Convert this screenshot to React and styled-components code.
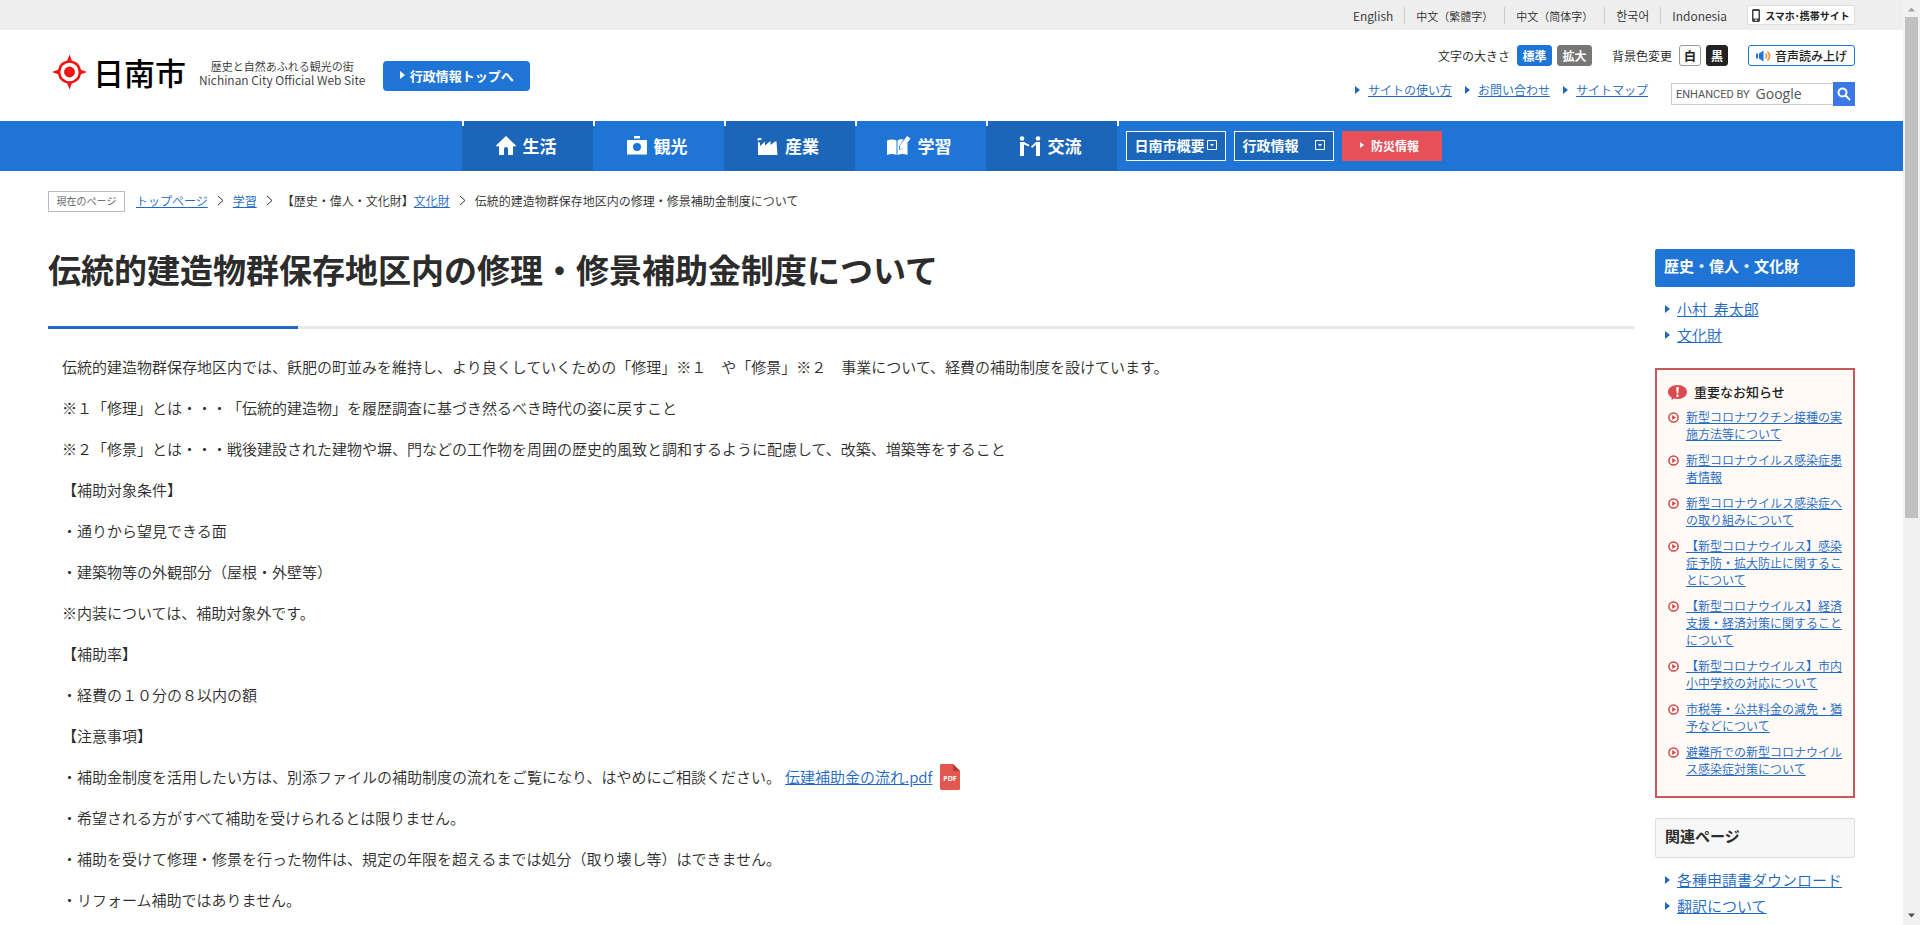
import React from 'react';
import styled, { createGlobalStyle, css, ThemeProvider } from 'styled-components';

const theme = {
  main_font: "'Noto Sans CJK JP', 'Noto Sans', sans-serif",
  primary: '#1f75d5',
  primary_dark: '#1b66b8',
  link: '#2068c4',
  text: '#2c2c2c',
  red: '#e65058',
  notice: '#c8595b',
};

const GlobalStyle = createGlobalStyle`
  * {
    box-sizing: border-box;
  }
  body {
    margin: 0;
    background-color: #fff;
    color: ${theme.text};
    font-family: ${theme.main_font};
    font-size: 15px;
    font-weight: 350;
    text-spacing-trim: space-all;
  }
  h1, h2, p, ul, ol {
    margin: 0;
    padding: 0;
  }
  ul, ol {
    list-style: none;
  }
  button, input {
    font-family: inherit;
    padding: 0;
    margin: 0;
  }
  svg {
    display: block;
    flex: none;
  }
  a {
    color: ${theme.link};
  }
`;

const Shell = styled.div`
  display: flex;
`;
const Page = styled.div`
  flex: 1;
  min-width: 0;
  min-height: 100vh;
`;

/* Scrollbar */
const Scrollbar = styled.div`
  display: flex;
  flex-direction: column;
  align-items: center;
  justify-content: space-between;
  position: sticky;
  top: 0;
  width: 17px;
  height: 100vh;
  padding: 7px 0;
  background-color: #f1f1f1;
`;
const Thumb = styled.div`
  width: 13px;
  height: 55%;
  margin: 5px 0 auto;
  background-color: #c1c1c1;
`;

/* Language bar */
const TopBar = styled.div`
  display: flex;
  align-items: center;
  justify-content: flex-end;
  height: 30px;
  padding: 0 48px;
  background-color: #eee;
`;
const Languages = styled.ul`
  display: flex;
  margin-right: 9px;
  li {
    padding: 0 11px;
    line-height: 16px;
    & + li {
      border-left: 1px solid #ccc;
    }
  }
  a {
    color: ${({ theme: { text } }) => text};
    font-size: 12px;
    text-decoration: none;
  }
`;
const CjkLanguage = styled.li`
  a {
    font-size: 11px;
  }
`;
const MobileSite = styled.a`
  display: flex;
  align-items: center;
  justify-content: center;
  gap: 5px;
  width: 108px;
  height: 20px;
  border: 1px solid #ddd;
  border-radius: 2px;
  background-color: #fff;
  color: #222;
  font-size: 10px;
  font-weight: bold;
  white-space: nowrap;
  text-decoration: none;
`;

/* Header */
const HeaderArea = styled.header`
  display: flex;
  justify-content: space-between;
  height: 91px;
  padding: 0 48px;
`;
const Brand = styled.div`
  display: flex;
  align-items: center;
  height: 84px;
  padding-left: 4px;
`;
const CityName = styled.a`
  display: flex;
  align-items: center;
  gap: 6px;
  color: #000;
  font-size: 31px;
  font-weight: 500;
  line-height: 40px;
  text-decoration: none;
`;
const Tagline = styled.p`
  margin: 2px 18px 0 13px;
  color: #333;
  font-size: 11px;
  line-height: 13px;
  text-align: center;
  white-space: nowrap;
  span {
    font-size: 12px;
  }
`;
const AdminTop = styled.a`
  display: flex;
  align-items: center;
  justify-content: center;
  gap: 5px;
  width: 147px;
  height: 30px;
  margin-top: 8px;
  padding-bottom: 2px;
  border-radius: 4px;
  background-color: ${({ theme: { primary } }) => primary};
  color: #fff;
  font-size: 13px;
  font-weight: bold;
  white-space: nowrap;
  text-decoration: none;
`;
const Tools = styled.div`
  display: flex;
  flex-direction: column;
  align-items: flex-end;
  gap: 16px;
  padding-top: 15px;
`;
const ToolRow = styled.div`
  display: flex;
  align-items: center;
  height: ${props => props.$height};
`;
const ToolLabel = styled.span`
  margin-right: 7px;
  color: #222;
  font-size: 12px;
  line-height: 21px;
`;
const ToolButton = styled.button`
  width: ${props => props.$width};
  height: 21px;
  margin-right: ${props => (props.$last ? '20px' : '5px')};
  border: 1px solid ${props => props.$border || props.$bg};
  border-radius: 3px;
  background-color: ${props => props.$bg};
  color: ${props => props.$color || '#fff'};
  font-size: 12px;
  font-weight: bold;
  line-height: 18px;
`;
const ReadAloud = styled.button`
  display: flex;
  align-items: center;
  justify-content: center;
  gap: 4px;
  width: 107px;
  height: 21px;
  border: 1px solid ${({ theme: { primary } }) => primary};
  border-radius: 3px;
  background-color: #fff;
  color: #222;
  font-size: 12px;
  font-weight: 500;
  line-height: 18px;
`;
const SubLinks = styled.ul`
  display: flex;
  gap: 13px;
  margin-right: 23px;
  padding-bottom: 8px;
  li {
    display: flex;
    align-items: center;
    gap: 8px;
    font-size: 12px;
    line-height: 18px;
  }
`;
const Search = styled.form`
  display: flex;
  align-items: center;
  width: 184px;
  label {
    display: flex;
    align-items: center;
    gap: 6px;
    padding-left: 4px;
    color: #555;
    font-family: Roboto, sans-serif;
    font-size: 11px;
    font-weight: 400;
    white-space: nowrap;
  }
  input {
    flex: 1;
    min-width: 0;
    height: 20px;
    border: none;
    outline: none;
  }
`;
const SearchBox = styled.div`
  display: flex;
  flex: 1;
  align-items: center;
  height: 22px;
  min-width: 0;
  border: 1px solid #ccc;
  border-right: none;
`;
const GoogleWord = styled.span`
  font-family: 'Open Sans', sans-serif;
  font-size: 14px;
  font-weight: 500;
  line-height: 20px;
`;
const SearchButton = styled.button`
  display: flex;
  align-items: center;
  justify-content: center;
  width: 22px;
  height: 24px;
  border: 1px solid #3b78e0;
  background-color: #3b78e7;
`;

/* Global navigation */
const Nav = styled.nav`
  display: flex;
  align-items: center;
  justify-content: center;
  height: 50px;
  background-color: ${({ theme: { primary } }) => primary};
`;
const NavItem = styled.a`
  ${({ theme: { primary, primary_dark }, $dark }) => css`
    display: flex;
    align-items: center;
    justify-content: center;
    gap: 7px;
    width: 131px;
    height: 50px;
    padding: 0 2px 1px 0;
    background: linear-gradient(#fff, #fff) left top / 2px 5px no-repeat ${$dark ? primary_dark : primary};
    color: #fff;
    font-size: 17px;
    font-weight: bold;
    text-decoration: none;
  `}
`;
const NavTail = styled.div`
  display: flex;
  align-items: center;
  gap: 8px;
  height: 50px;
  padding-left: 9px;
  background: linear-gradient(#fff, #fff) left top / 2px 5px no-repeat;
`;
const NavSelect = styled.button`
  display: flex;
  align-items: center;
  justify-content: space-between;
  width: 100px;
  height: 30px;
  padding: 0 8px 2px;
  border: 1px solid #fff;
  background-color: ${({ theme: { primary_dark } }) => primary_dark};
  color: #fff;
  font-size: 14px;
  font-weight: bold;
  white-space: nowrap;
`;
const Disaster = styled.a`
  display: flex;
  align-items: center;
  justify-content: center;
  gap: 7px;
  width: 100px;
  height: 30px;
  padding: 0 4px 2px 0;
  background-color: ${({ theme: { red } }) => red};
  color: #fff;
  font-size: 12px;
  font-weight: bold;
  text-decoration: none;
`;

/* Breadcrumb */
const Breadcrumb = styled.div`
  display: flex;
  align-items: center;
  padding: 20px 48px 0;
  font-size: 12px;
  line-height: 19px;
  ol {
    display: flex;
    padding-bottom: 2px;
  }
  li {
    display: flex;
    align-items: center;
  }
  li svg {
    margin: 0 9px;
  }
`;
const Here = styled.span`
  width: 77px;
  height: 21px;
  margin-right: 11px;
  border: 1px solid #bbb;
  color: #555;
  font-size: 10px;
  line-height: 18px;
  text-align: center;
`;

/* Contents */
const Contents = styled.div`
  display: flex;
  gap: 21px;
  padding: 37px 48px 0;
`;
const Main = styled.main`
  flex: 1;
  min-width: 0;
`;
const Title = styled.h1`
  height: 80px;
  border-bottom: 3px solid #e8e8e8;
  font-size: 33px;
  font-weight: bold;
  line-height: 40px;
  position: relative;
  &::after {
    content: '';
    position: absolute;
    left: 0;
    bottom: -3px;
    width: 250px;
    height: 3px;
    background-color: ${({ theme: { link } }) => link};
  }
`;
const Article = styled.div`
  padding: 24px 14px 0;
  p {
    display: flex;
    align-items: center;
    min-height: 27px;
    margin-bottom: 14px;
    line-height: 27px;
  }
  a {
    margin: 0 8px 0 4px;
  }
`;
const Side = styled.aside`
  width: 200px;
`;
const SideTitle = styled.h2`
  height: ${props => (props.$plain ? '40px' : '38px')};
  padding: 0 9px;
  border: ${props => (props.$plain ? '1px solid #ddd' : 'none')};
  border-radius: 2px;
  background-color: ${({ $plain, theme: { primary } }) => ($plain ? '#f7f7f7' : primary)};
  color: ${({ $plain, theme: { text } }) => ($plain ? text : '#fff')};
  font-size: 15px;
  font-weight: bold;
  line-height: 33px;
`;
const SideLinks = styled.ul`
  padding: 9px 0 1px 10px;
  li {
    display: flex;
    align-items: center;
    gap: 7px;
    line-height: 26px;
    white-space: pre;
  }
`;
const Notice = styled.section`
  margin: 19px 0 20px;
  padding: 11px 6px 19px 11px;
  border: 2px solid ${({ theme: { notice } }) => notice};
  background-color: #fffaf5;
  h2 {
    display: flex;
    align-items: center;
    gap: 7px;
    margin-bottom: 5px;
    color: #222;
    font-size: 13px;
    font-weight: 500;
    line-height: 22px;
  }
  li {
    display: flex;
    gap: 7px;
    margin-bottom: 9px;
    font-size: 12px;
    line-height: 17px;
  }
  li:last-child {
    margin-bottom: 0;
  }
  li svg {
    margin-top: 4px;
  }
`;

const Arrow = ({ color = theme.link, size = 8 }) => (
  <svg width={size / 2 + 1} height={size} viewBox="0 0 5 8" preserveAspectRatio="none" fill={color}>
    <path d="M0 0l5 4-5 4z" />
  </svg>
);
const Chevron = () => (
  <svg width="7" height="11" viewBox="0 0 7 11" fill="none" stroke="#333">
    <path d="M1 1l5 4.5L1 10" />
  </svg>
);
const DropMark = () => (
  <svg width="10" height="10" viewBox="0 0 10 10" fill="none" stroke="#fff">
    <path d="M.5.5h9v9h-9z" />
    <path d="M3 4h4L5 6.5z" fill="#fff" stroke="none" />
  </svg>
);
const CityMark = () => (
  <svg width="35" height="36" viewBox="0 0 36 36">
    <path
      fill="#f01414"
      d="M18 0l2.300 6.200a12 12 0 0 1 9.500 9.500L36 18l-6.200 2.300a12 12 0 0 1-9.500 9.500L18 36l-2.300-6.200a12 12 0 0 1-9.500-9.500L0 18l6.200-2.300a12 12 0 0 1 9.500-9.500z"
    />
    <circle cx="18" cy="18" r="9.400" fill="#fff" />
    <circle cx="18" cy="18" r="5.600" fill="#f01414" />
  </svg>
);
const PhoneIcon = () => (
  <svg width="8" height="13" viewBox="0 0 8 13">
    <path fill="#444" fillRule="evenodd" d="M1 0h6l1 1v11l-1 1H1l-1-1V1zM1.500 2v7.500h5V2zM3 10.500v1.300h2v-1.300z" />
  </svg>
);
const SpeakerIcon = () => (
  <svg width="15" height="12" viewBox="0 0 15 12" fill="none">
    <path d="M0 3.500h2v5H0zM3 3.500L7.500.5v11L3 8.500z" fill="#1f75d5" />
    <path d="M9.500 3.500c1.300 1.500 1.300 3.500 0 5M11.500 1.500c2.600 2.800 2.600 6.200 0 9" stroke="#f0902c" strokeWidth="1.500" />
  </svg>
);
const SearchIcon = () => (
  <svg width="14" height="14" viewBox="0 0 14 14" fill="none" stroke="#fff" strokeWidth="2">
    <circle cx="5.500" cy="5.500" r="4" />
    <path d="M8.500 8.500L13 13" />
  </svg>
);
const HomeIcon = () => (
  <svg width="20" height="19" viewBox="0 0 20 19" fill="#fff">
    <path d="M10 0l10 9.500-1 1.300-2-.8v9h-5v-6a2 2 0 0 0-4 0v6H3v-9l-2 .8-1-1.300z" />
  </svg>
);
const CameraIcon = () => (
  <svg width="20" height="19" viewBox="0 0 20 19" fill="#fff">
    <path d="M7 0h6v2.500H7z" />
    <path fillRule="evenodd" d="M0 4h20v14.500H0zM10 7a4 4 0 1 0 0 8 4 4 0 0 0 0-8z" />
  </svg>
);
const FactoryIcon = () => (
  <svg width="21" height="18" viewBox="0 0 21 18" fill="#fff">
    <path d="M1 4.500l2 1.500v3l5-4.500v4l5.500-4.500v4L18 4.500h1.500L20.500 18H1z" />
    <path d="M0 2l2-1 3 .5L4 3 1 3.500z" />
  </svg>
);
const BookIcon = () => (
  <svg width="24" height="20" viewBox="0 0 24 20" fill="#fff">
    <path d="M0 4.500C3 3 7 3 9.500 4.500V19C7 17.500 3 17.500 0 19zM10.500 4.500C13 3.200 15 3.200 16.500 3.500L12 10v4l3.500-1.500 5-6V19c-3-1.500-7-1.500-10 0z" />
    <path d="M20 0l3.500 2.500-7 9.500-3.800 1.300.3-4z" />
  </svg>
);
const PeopleIcon = () => (
  <svg width="22" height="20" viewBox="0 0 22 20" fill="#fff">
    <circle cx="3" cy="2.500" r="2.300" />
    <circle cx="19" cy="2.500" r="2.300" />
    <path d="M1 6h4l5.500 3-.8 1.500L5 8.500V20H1zM21 6h-4l-5 4.500 1 1.400 4-3.200V20h4z" />
  </svg>
);
const AlertIcon = () => (
  <svg width="19" height="15" viewBox="0 0 19 15">
    <path fill="#d9494d" d="M9.500 0C15 0 19 3 19 7s-4 7-9.500 7a13 13 0 0 1-3.500-.5L3.500 15l.3-2.500C1.500 11.300 0 9.300 0 7c0-4 4-7 9.500-7z" />
    <path fill="#fff" d="M8.200 2h2.600l-.5 6.500H8.700zM8.500 9.500h2V12h-2z" />
  </svg>
);
const CirclePlay = () => (
  <svg width="11" height="11" viewBox="0 0 11 11">
    <circle cx="5.500" cy="5.500" r="4.600" fill="none" stroke="#d0484c" strokeWidth="1.500" />
    <path fill="#d0484c" d="M4.200 3L8 5.500 4.200 8z" />
  </svg>
);
const PdfIcon = () => (
  <svg width="20" height="26" viewBox="0 0 20 26">
    <path fill="#e25850" d="M1 0h12l7 7v18l-1 1H1l-1-1V1z" />
    <path fill="#b83a36" d="M13 0l7 7h-7z" />
    <text x="10" y="17" fill="#fff" fontFamily="Open Sans, sans-serif" fontSize="7" fontWeight="bold" textAnchor="middle">
      PDF
    </text>
  </svg>
);

const navItems = [
  { label: '生活', Icon: HomeIcon },
  { label: '観光', Icon: CameraIcon },
  { label: '産業', Icon: FactoryIcon },
  { label: '学習', Icon: BookIcon },
  { label: '交流', Icon: PeopleIcon },
];

const notices = [
  '新型コロナワクチン接種の実施方法等について',
  '新型コロナウイルス感染症患者情報',
  '新型コロナウイルス感染症への取り組みについて',
  '【新型コロナウイルス】感染症予防・拡大防止に関することについて',
  '【新型コロナウイルス】経済支援・経済対策に関することについて',
  '【新型コロナウイルス】市内小中学校の対応について',
  '市税等・公共料金の減免・猶予などについて',
  '避難所での新型コロナウイルス感染症対策について',
];

const SideList = ({ items }) => (
  <SideLinks>
    {items.map(item => (
      <li key={item}>
        <Arrow />
        <a href="#">{item}</a>
      </li>
    ))}
  </SideLinks>
);

const Header = () => (
  <>
    <TopBar>
      <Languages>
        <li><a href="#">English</a></li>
        <CjkLanguage><a href="#">中文（繁體字）</a></CjkLanguage>
        <CjkLanguage><a href="#">中文（简体字）</a></CjkLanguage>
        <li><a href="#">한국어</a></li>
        <li><a href="#">Indonesia</a></li>
      </Languages>
      <MobileSite href="#">
        <PhoneIcon />
        スマホ･携帯サイト
      </MobileSite>
    </TopBar>
    <HeaderArea>
      <Brand>
        <CityName href="#">
          <CityMark />
          日南市
        </CityName>
        <Tagline>
          歴史と自然あふれる観光の街
          <br />
          <span>Nichinan City Official Web Site</span>
        </Tagline>
        <AdminTop href="#">
          <Arrow color="#fff" />
          行政情報トップへ
        </AdminTop>
      </Brand>
      <Tools>
        <ToolRow $height="21px">
          <ToolLabel>文字の大きさ</ToolLabel>
          <ToolButton $width="35px" $bg="#1f75d5">標準</ToolButton>
          <ToolButton $width="35px" $bg="#777" $last>拡大</ToolButton>
          <ToolLabel>背景色変更</ToolLabel>
          <ToolButton $width="22px" $bg="#fff" $border="#999" $color="#222">白</ToolButton>
          <ToolButton $width="22px" $bg="#222" $last>黒</ToolButton>
          <ReadAloud>
            <SpeakerIcon />
            音声読み上げ
          </ReadAloud>
        </ToolRow>
        <ToolRow $height="24px">
          <SubLinks>
            <li><Arrow /><a href="#">サイトの使い方</a></li>
            <li><Arrow /><a href="#">お問い合わせ</a></li>
            <li><Arrow /><a href="#">サイトマップ</a></li>
          </SubLinks>
          <Search onSubmit={e => e.preventDefault()}>
            <SearchBox>
              <label htmlFor="q">
                ENHANCED BY <GoogleWord>Google</GoogleWord>
              </label>
              <input id="q" type="text" name="q" />
            </SearchBox>
            <SearchButton type="submit" aria-label="検索">
              <SearchIcon />
            </SearchButton>
          </Search>
        </ToolRow>
      </Tools>
    </HeaderArea>
  </>
);

const App = () => {
  return (
    <ThemeProvider theme={theme}>
      <GlobalStyle />
      <Shell>
        <Page>
          <Header />
          <Nav>
            {navItems.map(({ label, Icon }, i) => (
              <NavItem href="#" key={label} $dark={i % 2 === 0}>
                <Icon />
                {label}
              </NavItem>
            ))}
            <NavTail>
              <NavSelect>日南市概要<DropMark /></NavSelect>
              <NavSelect>行政情報<DropMark /></NavSelect>
              <Disaster href="#"><Arrow color="#fff" size={6} />防災情報</Disaster>
            </NavTail>
          </Nav>
          <Breadcrumb>
            <Here>現在のページ</Here>
            <ol>
              <li><a href="#">トップページ</a><Chevron /></li>
              <li><a href="#">学習</a><Chevron /></li>
              <li>【歴史・偉人・文化財】<a href="#">文化財</a><Chevron /></li>
              <li>伝統的建造物群保存地区内の修理・修景補助金制度について</li>
            </ol>
          </Breadcrumb>
          <Contents>
            <Main>
              <Title>伝統的建造物群保存地区内の修理・修景補助金制度について</Title>
              <Article>
                <p>伝統的建造物群保存地区内では、飫肥の町並みを維持し、より良くしていくための「修理」※１　や「修景」※２　事業について、経費の補助制度を設けています。</p>
                <p>※１「修理」とは・・・「伝統的建造物」を履歴調査に基づき然るべき時代の姿に戻すこと</p>
                <p>※２「修景」とは・・・戦後建設された建物や塀、門などの工作物を周囲の歴史的風致と調和するように配慮して、改築、増築等をすること</p>
                <p>【補助対象条件】</p>
                <p>・通りから望見できる面</p>
                <p>・建築物等の外観部分（屋根・外壁等）</p>
                <p>※内装については、補助対象外です。</p>
                <p>【補助率】</p>
                <p>・経費の１０分の８以内の額</p>
                <p>【注意事項】</p>
                <p>
                  ・補助金制度を活用したい方は、別添ファイルの補助制度の流れをご覧になり、はやめにご相談ください。
                  <a href="#">伝建補助金の流れ.pdf</a>
                  <PdfIcon />
                </p>
                <p>・希望される方がすべて補助を受けられるとは限りません。</p>
                <p>・補助を受けて修理・修景を行った物件は、規定の年限を超えるまでは処分（取り壊し等）はできません。</p>
                <p>・リフォーム補助ではありません。</p>
              </Article>
            </Main>
            <Side>
              <SideTitle>歴史・偉人・文化財</SideTitle>
              <SideList items={['小村  寿太郎', '文化財']} />
              <Notice>
                <h2>
                  <AlertIcon />
                  重要なお知らせ
                </h2>
                <ul>
                  {notices.map(notice => (
                    <li key={notice}>
                      <CirclePlay />
                      <a href="#">{notice}</a>
                    </li>
                  ))}
                </ul>
              </Notice>
              <SideTitle $plain>関連ページ</SideTitle>
              <SideList items={['各種申請書ダウンロード', '翻訳について']} />
            </Side>
          </Contents>
        </Page>
        <Scrollbar>
          <svg width="7" height="5" viewBox="0 0 7 5" fill="#a3a3a3"><path d="M0 4.500L3.500.5 7 4.500z" /></svg>
          <Thumb />
          <svg width="7" height="5" viewBox="0 0 7 5" fill="#505050"><path d="M0 .5l3.500 4L7 .5z" /></svg>
        </Scrollbar>
      </Shell>
    </ThemeProvider>
  );
};

export default App;
